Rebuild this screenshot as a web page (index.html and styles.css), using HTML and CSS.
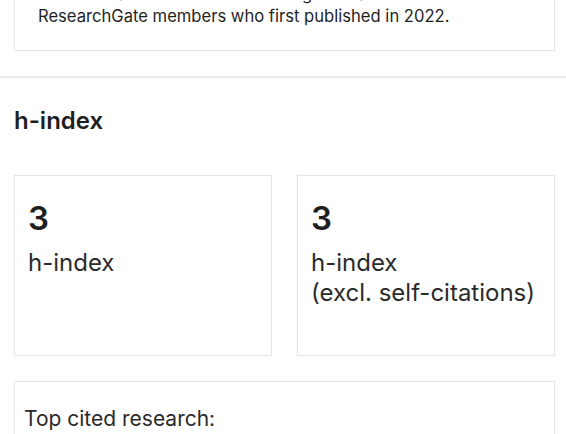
FILE: index.html
```html
<!DOCTYPE html>
<html>
<head>
    <title>Stats</title>
    <link rel="stylesheet" href="styles.css">
</head>
<body>
    <div class="section section-score">
        <div class="card score-card">
            <p>Your Research Interest Score is higher than 46% of ResearchGate members who first published in 2022.</p>
        </div>
    </div>
    <div class="section section-hindex">
        <h2>h-index</h2>
        <div class="stat-grid">
            <div class="card stat-card">
                <div class="stat-value">3</div>
                <div class="stat-label">h-index</div>
            </div>
            <div class="card stat-card">
                <div class="stat-value">3</div>
                <div class="stat-label">h-index<br>(excl. self-citations)</div>
            </div>
        </div>
        <div class="card cited-card">
            <div class="cited-title">Top cited research:</div>
        </div>
    </div>
</body>
</html>
```

FILE: styles.css
```css
body {
    font-family: Inter, "Noto Sans", sans-serif;
    background-color: white;
    color: #1f1f1f;
    margin: 0;
    overflow: hidden;
}
.section {
    padding: 0 11px 0 14px;
}
.section-score {
    padding-bottom: 25px;
    border-bottom: 2px solid #ebebeb;
}
.card {
    background-color: white;
    border: 1px solid #e6e6e6;
    box-shadow: 0px 0px 2px 0px rgba(0,0,0,0.05);
}
.score-card {
    margin-top: -40px;
    padding: 22px 20px 23px 23px;
}
.score-card p {
    margin: 0;
    font-size: 16.6px;
    line-height: 22px;
    width: 430px;
}
.section-hindex h2 {
    margin: 0;
    padding-top: 28px;
    font-size: 24px;
    line-height: 30px;
    font-weight: 600;
}
.stat-grid {
    display: grid;
    grid-template-columns: 1fr 1fr;
    gap: 25px;
    margin-top: 39px;
}
.stat-card {
    height: 181px;
    padding: 24px 13px 0 13px;
    box-sizing: border-box;
}
.stat-value {
    font-size: 33px;
    line-height: 36px;
    font-weight: 600;
}
.stat-label {
    margin-top: 12px;
    font-size: 24px;
    line-height: 30px;
    color: #2b2b2b;
}
.cited-card {
    margin-top: 25px;
    padding: 22px 9px 40px 9px;
}
.cited-title {
    font-size: 21px;
    line-height: 30px;
    color: #2b2b2b;
}
```
